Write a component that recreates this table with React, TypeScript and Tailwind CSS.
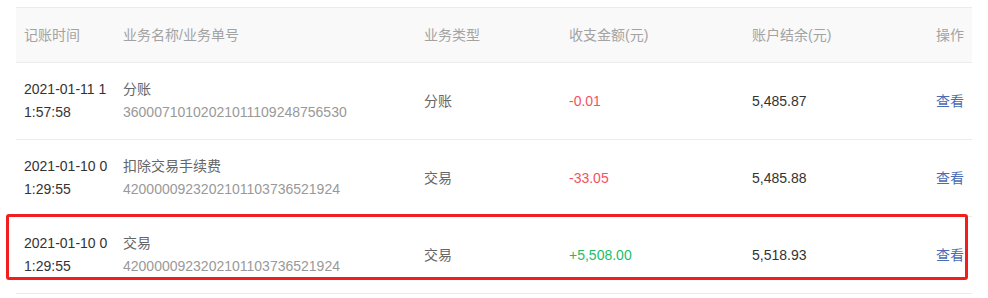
import React from 'react'

const cols = 'grid grid-cols-[99px_301px_145px_183px_184px_46px] items-center'

const rows = [
  {
    time: ['2021-01-11 1', '1:57:58'],
    name: '分账',
    no: '36000710102021011109248756530',
    type: '分账',
    amount: '-0.01',
    income: false,
    balance: '5,485.87',
  },
  {
    time: ['2021-01-10 0', '1:29:55'],
    name: '扣除交易手续费',
    no: '4200000923202101103736521924',
    type: '交易',
    amount: '-33.05',
    income: false,
    balance: '5,485.88',
  },
  {
    time: ['2021-01-10 0', '1:29:55'],
    name: '交易',
    no: '4200000923202101103736521924',
    type: '交易',
    amount: '+5,508.00',
    income: true,
    balance: '5,518.93',
  },
]

const App = () => {
  return (
    <div
      className="relative w-[988px] h-[298px] bg-white pt-[7px] px-[16px] text-[14px] text-[#333]"
      style={{ fontFamily: '"Liberation Sans", Arial, "Noto Sans CJK SC", sans-serif' }}
    >
      <div className={`${cols} h-[56px] bg-[#f9f9f9] border-t border-b border-[#ececec] text-[#a3a3a3]`}>
        <div className="pl-2">记账时间</div>
        <div className="pl-2">业务名称/业务单号</div>
        <div className="pl-2">业务类型</div>
        <div className="pl-2">收支金额(元)</div>
        <div className="pl-2">账户结余(元)</div>
        <div className="pl-2">操作</div>
      </div>

      {rows.map((r, i) => (
        <div key={i} className={`${cols} h-[77px] border-b border-[#ececec] leading-[23px]`}>
          <div className="pl-2 text-[#333]">
            <div>{r.time[0]}</div>
            <div>{r.time[1]}</div>
          </div>
          <div className="pl-2">
            <div className="text-[#666]">{r.name}</div>
            <div className="text-[#999]">{r.no}</div>
          </div>
          <div className="pl-2 text-[#666]">{r.type}</div>
          <div className={`pl-2 ${r.income ? 'text-[#19be6b]' : 'text-[#f5515f]'}`}>{r.amount}</div>
          <div className="pl-2 text-[#333]">{r.balance}</div>
          <div className="pl-2 text-[#4a6cb5] cursor-pointer">查看</div>
        </div>
      ))}

      {/* annotation box round the last row */}
      <div className="absolute left-[6px] top-[214px] w-[962px] h-[66px] border-[3px] border-[#f21d1d] rounded-[3px] pointer-events-none" />
    </div>
  )
}

export default App
